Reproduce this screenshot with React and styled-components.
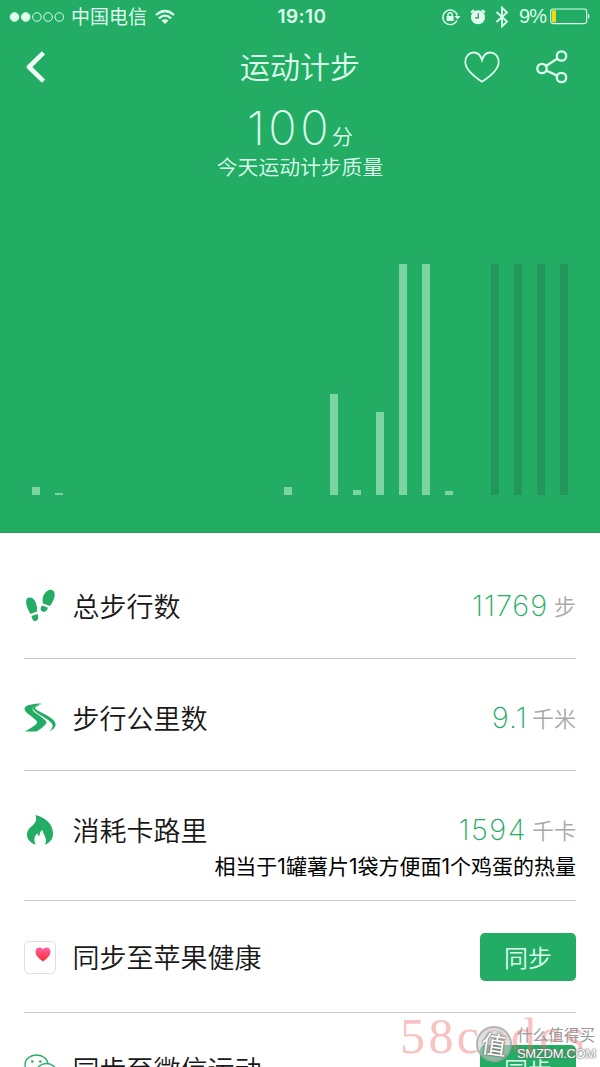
import React from "react";
import styled, { createGlobalStyle } from "styled-components";

const GREEN = "#22ac64";
const PALE = "#dfffee";

const GlobalStyle = createGlobalStyle`
  * {
    box-sizing: border-box;
  }
  body {
    margin: 0;
    background: #fff;
    font-family: "Noto Sans CJK SC", sans-serif;
  }
`;

const Screen = styled.div`
  position: relative;
  width: 600px;
  height: 1067px;
  overflow: hidden;
  background: #fff;
`;

const Hero = styled.header`
  display: flex;
  flex-direction: column;
  height: 533px;
  background: ${GREEN};
  border-bottom: 1px solid #2a9c60;
  color: ${PALE};
`;

const StatusBar = styled.div`
  display: grid;
  grid-template-columns: 1fr auto 1fr;
  align-items: center;
  height: 33px;
  padding: 0 9px;
`;

const StatusSide = styled.div`
  display: flex;
  align-items: center;
  justify-content: ${(p) => (p.$end ? "flex-end" : "flex-start")};
`;

const StatusGap = styled.span`
  width: 9px;
`;

const Carrier = styled.span`
  height: 33px;
  margin: 0 8px 0 6px;
  font-size: 19px;
  line-height: 31px;
`;

const Clock = styled.span`
  padding-left: 4px;
  font: 600 19px/33px Inter, sans-serif;
  letter-spacing: 0.4px;
`;

const Percent = styled.span`
  margin: 0 4px 0 10px;
  font: 400 20px/33px "Liberation Sans", sans-serif;
  letter-spacing: -1px;
`;

const NavBar = styled.nav`
  display: grid;
  grid-template-columns: 1fr auto 1fr;
  align-items: center;
  height: 68px;
  padding: 0 32px 0 25px;
`;

const NavTitle = styled.h1`
  margin: 0;
  padding-left: 7px;
  height: 68px;
  font-size: 30px;
  font-weight: 350;
  line-height: 65px;
`;

const NavActions = styled.div`
  display: flex;
  align-items: center;
  justify-content: flex-end;
  gap: 36px;
`;

const Score = styled.div`
  display: flex;
  align-items: baseline;
  justify-content: center;
  height: 50px;
  margin-top: 1px;
  line-height: 49px;
  font-size: 21px;
  font-weight: 350;
`;

const Digits = styled.span`
  font-family: Inter, sans-serif;
  font-weight: ${(p) => p.$weight || 250};
  font-size: ${(p) => p.$size}px;
  letter-spacing: ${(p) => p.$spacing}px;
  transform: translateY(1px);
`;

const Caption = styled.p`
  margin: 0;
  height: 32px;
  line-height: 29px;
  text-align: center;
  font-size: 20.8px;
  font-weight: 350;
`;

const Chart = styled.div`
  display: flex;
  align-items: flex-end;
  justify-content: space-between;
  height: 231px;
  margin: 80px 32px 0;
`;

const Bar = styled.div`
  width: 8px;
  background: ${(p) => (p.$dim ? "#23965c" : "#7dd4a3")};
`;

const List = styled.main`
  padding: 14px 24px 0;
`;

const Row = styled.section`
  height: ${(p) => (p.$tall ? 130 : 112)}px;
  padding-top: ${(p) => p.$top}px;
  border-bottom: 1px solid #c9c9c9;
`;

const RowMain = styled.div`
  display: flex;
  align-items: center;
  height: 48px;
`;

const IconBox = styled.span`
  display: flex;
  width: 48.5px;
  flex: none;
`;

const Label = styled.span`
  flex: 1;
  color: #181818;
  font-size: 27px;
  font-weight: 350;
  line-height: 48px;
`;

const Value = styled.span`
  display: flex;
  align-items: baseline;
  height: 48px;
  color: ${GREEN};
  line-height: 46px;
`;

const Unit = styled.span`
  margin-left: ${(p) => p.$gap || 6}px;
  color: #aaa;
  font-size: 22px;
  font-weight: 350;
`;

const Note = styled.p`
  margin: -2px 0 0;
  color: #000;
  text-align: right;
  font-family: Inter, "Noto Sans CJK SC", sans-serif;
  font-size: 21px;
  line-height: 30px;
`;

const SyncButton = styled.button`
  width: 96px;
  height: 48px;
  padding: 0;
  border: 0;
  border-radius: 5px;
  background: ${GREEN};
  color: ${PALE};
  font: 350 24px/46px "Noto Sans CJK SC", sans-serif;
`;

const HealthTile = styled.span`
  display: flex;
  width: 32px;
  height: 33px;
  padding: 5px 0 0 10px;
  border: 1px solid #dedede;
  border-radius: 5px;
`;

const PinkMark = styled.div`
  position: absolute;
  left: 400px;
  top: 1008px;
  color: rgba(240, 110, 110, 0.42);
  font: 400 50px/56px "Liberation Serif", serif;
  letter-spacing: 3.4px;
`;

const SiteMark = styled.div`
  position: absolute;
  left: 476px;
  top: 1024px;
  display: flex;
  align-items: center;
  gap: 5px;
`;

const SiteBadge = styled.span`
  width: 36px;
  height: 36px;
  border: 2px solid rgba(150, 150, 150, 0.6);
  border-radius: 50%;
  background: rgba(205, 205, 205, 0.6);
  color: #fff;
  font-size: 25px;
  line-height: 30px;
  text-align: center;
  text-shadow: 0 0 2px #666, 0 0 2px #666;
  transform: rotate(8deg);
`;

const SiteText = styled.span`
  display: flex;
  flex-direction: column;
  color: #999;
  font-size: 15.6px;
  line-height: 20px;
  white-space: nowrap;
`;

const SiteDomain = styled.span`
  color: #fff;
  font: 400 13px/20px "Liberation Sans", sans-serif;
  letter-spacing: -0.3px;
  text-shadow: 0 0 2px #666, 0 0 2px #777;
`;

const steps = [8, 2, 0, 0, 0, 0, 0, 0, 0, 0, 0, 8, 0, 101, 5, 83, 231, 231, 4, 0];
const remaining = [231, 231, 231, 231];

const SignalIcon = () => (
  <svg width="56" height="12" viewBox="0 0 56 12" fill="none" stroke={PALE}>
    {[0, 1, 2, 3, 4].map((i) => (
      <circle key={i} cx={5.5 + i * 11.2} cy="6" r="4.3" fill={i < 2 ? PALE : "none"} />
    ))}
  </svg>
);

const WifiIcon = () => (
  <svg width="20" height="16" viewBox="0 0 20 16" fill="none" stroke={PALE} strokeWidth="2.3">
    <path d="M1 6Q10-2 19 6M4 9.3Q10 4 16 9.3" />
    <path d="M6.5 11.5Q10 8.8 13.5 11.5L10 15Z" fill={PALE} stroke="none" />
  </svg>
);

const LockIcon = () => (
  <svg width="20" height="18" viewBox="0 0 20 18" fill="none" stroke={PALE} strokeWidth="1.4">
    <path d="M15.8 12.5A7.3 7.3 0 1 1 16.3 7.5" />
    <path d="M13.4 8h6.2l-3.1 3.6Z" fill={PALE} stroke="none" />
    <rect x="5.6" y="8" width="7" height="5" fill={PALE} stroke="none" />
    <path d="M7 8.5V6.8a2.1 2.1 0 0 1 4.2 0V8.5" />
  </svg>
);

const AlarmIcon = () => (
  <svg width="16" height="18" viewBox="0 0 16 18" fill="none">
    <circle cx="8" cy="9.3" r="7" fill={PALE} />
    <path d="M1 4.5 4 2M15 4.5 12 2" stroke={PALE} strokeWidth="2" />
    <path d="M8.3 5V9.8H5" stroke="#4a7a60" strokeWidth="1.2" />
  </svg>
);

const BluetoothIcon = () => (
  <svg width="14" height="22" viewBox="0 0 14 22" fill="none" stroke={PALE} strokeWidth="1.8">
    <path d="M1.5 6 12 15.5 7 20.5V1.5L12 6.5 1.5 16" />
  </svg>
);

const BatteryIcon = () => (
  <svg width="41" height="17" viewBox="0 0 41 17" fill="none">
    <rect x=".7" y="1" width="36" height="14.6" rx="2.5" stroke={PALE} strokeWidth="1.1" />
    <rect x="2" y="2.3" width="4" height="12" fill="#f1d912" />
    <path d="M38 5.5q3 2.8 0 5.6Z" fill={PALE} />
  </svg>
);

const BackIcon = () => (
  <svg width="20" height="32" viewBox="0 0 20 32" fill="none" stroke="#f0fff6" strokeWidth="4.6">
    <path d="M18.5 1.8 4 16 18.5 30.2" strokeLinejoin="round" />
  </svg>
);

const HeartIcon = () => (
  <svg width="36" height="32" viewBox="0 0 36 32" fill="none" stroke={PALE} strokeWidth="1.8">
    <path d="M18 9C16.5 4 13.5 1.5 9.8 1.5 5 1.5 1.3 5.3 1.3 11c0 7.5 7.2 13.5 16.7 19.7C27.5 24.5 34.7 18.5 34.7 11c0-5.7-3.7-9.5-8.5-9.5C22.5 1.5 19.5 4 18 9Z" />
  </svg>
);

const ShareIcon = () => (
  <svg width="32" height="34" viewBox="0 0 32 34" fill="none" stroke={PALE} strokeWidth="2.3">
    <circle cx="6" cy="18.5" r="4.7" />
    <circle cx="25.5" cy="6" r="4.7" />
    <circle cx="25.5" cy="27.5" r="4.7" />
    <path d="M10 16 21.5 8.5M10 20.5 21.3 25.6" />
  </svg>
);

const StepsIcon = () => (
  <svg width="32" height="34" viewBox="0 0 32 34" fill={GREEN}>
    <path d="M3 9.5C6 7 10 9 11.500 13c1.500 4 1.800 7 1.500 9.500L6.500 25C3.500 20 .5 13 3 9.500Z" />
    <path d="M7.500 27 13.500 25c1.500 4 .5 6.500-2 7-2.500.3-3.500-2-4-5Z" />
    <path d="M29 1.500C32 4 31 10 26 17l-7-2.500C18 9 19.500 5 22.500 2.500 25 .5 27.500.2 29 1.500Z" />
    <path d="M18.300 16.500 24 18.800c-1 3.200-3 4.700-5.500 3.700-2.500-1-2.500-4-.2-6Z" />
  </svg>
);

const RoadIcon = () => (
  <svg width="32" height="30" viewBox="0 0 32 30" fill={GREEN}>
    <path d="M17.700.5C11 .5 3 1.700.9 4.300-.3 7.500 2 9 5 11.500L12 17.200c1.500 1.500 1.500 2.600 0 4C9 23.800 5 26 .8 28.600H12.500C16 26.500 20 23.500 22 20.800c.8-1.200.5-2-.5-3.200C18.500 14.300 13 11 10 8.700 6.800 5.700 9 3.300 17.700.5Z" />
    <path d="M18.500 1.300C13.500 2.700 11 3.800 11 5.300 12 7.500 21.500 11 27 15c3.200 2.300 5 4.700 4.600 7.300-.4 2.400-3 4.700-6.300 6.300 2.200-2.200 3.700-4.200 3.200-6.500C27.500 18 19 14 12.500 9.500 9.800 7.600 8.600 6.200 9.300 4.800 10.300 2.800 13.500 1.800 18.500 1.300Z" />
  </svg>
);

const FlameIcon = () => (
  <svg width="32" height="32" viewBox="0 0 32 32" fill={GREEN}>
    <path d="M11.500 1C23 4 29 11 29 19.500c0 5.500-3 9-8 11.300 1.400-3 1.200-6-.3-9-1-2-2.200-3.800-2.200-6-2.200 1.500-3.200 3.700-3 6.200-1.300-.4-2-1.500-2.200-2.800-3.300 3-3.700 7.300-1.500 11.600C6 28.700 3 25 3 20.500c0-8.500 12-9 8.500-19.500Z" />
  </svg>
);

const HealthIcon = () => (
  <svg width="16" height="15" viewBox="0 0 16 15">
    <defs>
      <linearGradient id="pulse" x1="0" y1="0" x2="0" y2="1">
        <stop offset="0" stopColor="#ff62a0" />
        <stop offset="1" stopColor="#fb2b30" />
      </linearGradient>
    </defs>
    <path d="M8 14.500C3 11 .5 8 .5 4.700.5 2 2.300.5 4.400.5 6 .5 7.300 1.200 8 2.500 8.700 1.200 10 .5 11.600.5c2.100 0 3.900 1.500 3.900 4.200C15.500 8 13 11 8 14.500Z" fill="url(#pulse)" />
  </svg>
);

const WechatIcon = () => (
  <svg width="34" height="30" viewBox="0 0 34 30" fill="#fff" stroke={GREEN} strokeWidth="1.3">
    <path d="M12.500 1C6 1 1 5 1 10.500c0 3 1.800 5.800 4.600 7.500L4.500 21.500 8.500 19.500C18 22 24 16 24 10.500 24 5 19 1 12.500 1Z" />
    <path d="M22.500 9.500c-5.800 0-10 3.600-10 8.400s4.200 8.400 10 8.400c1.200 0 2.400-.2 3.500-.5l3.300 1.800-1-3c2.400-1.600 4-4 4-6.700 0-4.800-4.200-8.400-9.800-8.400Z" />
    <g fill={GREEN} stroke="none">
      <circle cx="8.3" cy="7.5" r="1.3" />
      <circle cx="16.3" cy="7.5" r="1.3" />
      <circle cx="19.5" cy="15.5" r="1" />
      <circle cx="26" cy="15.5" r="1" />
    </g>
  </svg>
);

function Stat({ icon, label, value, spacing, unit, gap, note }) {
  return (
    <Row $top={35} $tall={Boolean(note)}>
      <RowMain>
        <IconBox>{icon}</IconBox>
        <Label>{label}</Label>
        <Value>
          <Digits $size={29} $spacing={spacing}>{value}</Digits>
          <Unit $gap={gap}>{unit}</Unit>
        </Value>
      </RowMain>
      {note && <Note>{note}</Note>}
    </Row>
  );
}

function SyncRow({ icon, label }) {
  return (
    <Row $top={32}>
      <RowMain>
        <IconBox>{icon}</IconBox>
        <Label>{label}</Label>
        <SyncButton>同步</SyncButton>
      </RowMain>
    </Row>
  );
}

function App() {
  return (
    <Screen>
      <GlobalStyle />
      <Hero>
        <StatusBar>
          <StatusSide>
            <SignalIcon />
            <Carrier>中国电信</Carrier>
            <WifiIcon />
          </StatusSide>
          <Clock>19:10</Clock>
          <StatusSide $end>
            <LockIcon />
            <StatusGap />
            <AlarmIcon />
            <StatusGap />
            <BluetoothIcon />
            <Percent>9%</Percent>
            <BatteryIcon />
          </StatusSide>
        </StatusBar>
        <NavBar>
          <BackIcon />
          <NavTitle>运动计步</NavTitle>
          <NavActions>
            <HeartIcon />
            <ShareIcon />
          </NavActions>
        </NavBar>
        <Score>
          <Digits $size={47} $weight={200} $spacing={3.5}>100</Digits>
          <span>分</span>
        </Score>
        <Caption>今天运动计步质量</Caption>
        <Chart>
          {steps.map((h, i) => <Bar key={i} style={{ height: h }} />)}
          {remaining.map((h, i) => <Bar key={i} $dim style={{ height: h }} />)}
        </Chart>
      </Hero>
      <List>
        <Stat icon={<StepsIcon />} label="总步行数" value="11769" spacing={0.9} unit="步" gap={6} />
        <Stat icon={<RoadIcon />} label="步行公里数" value="9.1" spacing={1.2} unit="千米" gap={4} />
        <Stat
          icon={<FlameIcon />}
          label="消耗卡路里"
          value="1594"
          spacing={1.5}
          unit="千卡"
          gap={5}
          note="相当于1罐薯片1袋方便面1个鸡蛋的热量"
        />
        <SyncRow icon={<HealthTile><HealthIcon /></HealthTile>} label="同步至苹果健康" />
        <SyncRow icon={<WechatIcon />} label="同步至微信运动" />
      </List>
      <PinkMark>58codes</PinkMark>
      <SiteMark>
        <SiteBadge>值</SiteBadge>
        <SiteText>
          什么值得买
          <SiteDomain>SMZDM.COM</SiteDomain>
        </SiteText>
      </SiteMark>
    </Screen>
  );
}

export default App;
